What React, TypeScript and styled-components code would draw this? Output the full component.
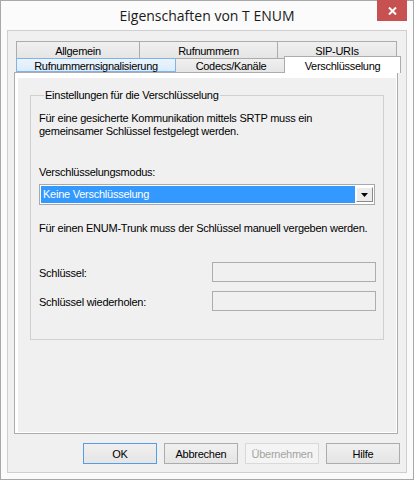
import React from 'react';
import styled, { createGlobalStyle, css } from 'styled-components';

const Global = createGlobalStyle`
  html, body { margin: 0; padding: 0; background: #ffffff; }
  body {
    font-family: "Liberation Sans", Arial, sans-serif;
    font-size: 11px;
    color: #000;
  }
  * { box-sizing: border-box; }
`;

const Window = styled.div`
  width: 414px;
  height: 480px;
  border: 1px solid #a8a8a8;
  background: #fbfbfb;
  padding: 0 6px 6px;
  display: flex;
  flex-direction: column;
`;

const TitleBar = styled.div`
  height: 29px;
  display: grid;
  grid-template-columns: 1fr auto 1fr;
  align-items: start;
`;

const Title = styled.div`
  grid-column: 2;
  font-family: "Open Sans", "Noto Sans", sans-serif;
  font-size: 14px;
  line-height: 30px;
  color: #1a1a1a;
  white-space: nowrap;
`;

const CloseButton = styled.div`
  grid-column: 3;
  justify-self: end;
  margin-top: -1px;
  width: 30px;
  height: 21px;
  background: #c75050;
  display: flex;
  align-items: center;
  justify-content: center;
`;

const Client = styled.div`
  flex: 1;
  border: 1px solid #cfcfcf;
  background: #f0f0f0;
  padding: 10px 6px 8px 6px;
  display: flex;
  flex-direction: column;
`;

const TabControl = styled.div`
  height: 393px;
  margin-right: 2px;
  display: flex;
  flex-direction: column;
`;

const TabRow = styled.div<{ $h: number }>`
  display: flex;
  height: ${(p) => p.$h}px;
  padding-left: 2px;
`;

type TabKind = 'normal' | 'hot' | 'selected';

const Tab = styled.div<{ $w: number; $kind?: TabKind }>`
  position: relative;
  width: ${(p) => p.$w}px;
  flex: none;
  margin-left: -1px;
  &:first-child { margin-left: 0; }
  border: 1px solid #acacac;
  border-bottom: none;
  background: linear-gradient(#f0f0f0, #e5e5e5);
  display: flex;
  align-items: center;
  justify-content: center;
  white-space: nowrap;
  letter-spacing: -0.3px;
  padding-top: 1px;
  ${(p) =>
    p.$kind === 'hot' &&
    css`
      z-index: 1;
      border: 1px solid #7eb4ea;
      background: linear-gradient(#ecf4fc, #dcecfc);
      padding-top: 2px;
    `}
  ${(p) =>
    p.$kind === 'selected' &&
    css`
      z-index: 2;
      margin: -2px -2px -1px -3px;
      background: #ffffff;
      align-items: flex-start;
      padding-top: 3px;
    `}
`;

const Panel = styled.div`
  flex: 1;
  border: 1px solid #acacac;
  background: #ffffff;
  padding: 5px 1px 1px 3px;
  display: flex;
`;

const Page = styled.div`
  flex: 1;
  background: #f0f0f0;
  padding: 11px 0 0 12px;
`;

const GroupBox = styled.fieldset`
  margin: 0;
  width: 354px;
  border: 1px solid #d0d0d0;
  padding: 10px 7px 28px 8px;
  min-width: 0;
`;

const Legend = styled.legend`
  margin-left: 5px;
  padding: 0 1px;
  line-height: 13px;
  letter-spacing: -0.25px;
`;

const Text = styled.div<{ $mt?: number }>`
  line-height: 13px;
  letter-spacing: -0.25px;
  margin-top: ${(p) => p.$mt ?? 0}px;
  white-space: nowrap;
`;

const Combo = styled.div`
  margin-top: 5px;
  width: 336px;
  height: 21px;
  border: 1px solid #a9a9a9;
  padding: 1px;
  background: #ffffff;
  display: flex;
`;

const ComboValue = styled.div`
  flex: 1;
  background: #3399ff;
  color: #ffffff;
  padding-left: 2px;
  line-height: 17px;
  letter-spacing: -0.25px;
  white-space: nowrap;
`;

const ComboButton = styled.div`
  width: 17px;
  height: 15px;
  margin: 1px 0 0 1px;
  border: 1px solid;
  border-color: #ffffff #8a8a8a #8a8a8a #ffffff;
  background: #ececec;
  display: flex;
  align-items: center;
  justify-content: center;
`;

const FieldRow = styled.div<{ $mt: number }>`
  display: flex;
  align-items: center;
  margin-top: ${(p) => p.$mt}px;
`;

const FieldLabel = styled.div`
  width: 173px;
  line-height: 13px;
  padding-top: 3px;
  letter-spacing: -0.25px;
`;

const Input = styled.div`
  width: 164px;
  height: 20px;
  border: 1px solid #adadad;
  background: #f0f0f0;
`;

const ButtonRow = styled.div`
  margin-top: 9px;
  display: flex;
  justify-content: flex-end;
  gap: 7px;
`;

const Button = styled.div<{ $default?: boolean; $disabled?: boolean }>`
  width: 74px;
  height: 21px;
  border: 1px solid #acacac;
  background: linear-gradient(#f0f0f0, #e5e5e5);
  display: flex;
  align-items: center;
  justify-content: center;
  letter-spacing: -0.25px;
  ${(p) =>
    p.$default &&
    css`
      border-color: #569de5;
    `}
  ${(p) =>
    p.$disabled &&
    css`
      border-color: #d9d9d9;
      background: #f4f4f4;
      color: #a3a3a3;
    `}
`;

export default function App() {
  return (
    <>
      <Global />
      <Window>
        <TitleBar>
          <Title>Eigenschaften von T ENUM</Title>
          <CloseButton>
            <svg width="9" height="8" viewBox="0 0 9 8">
              <path d="M1 0.5 L8 7.5 M8 0.5 L1 7.5" stroke="#ffffff" strokeWidth="2" />
            </svg>
          </CloseButton>
        </TitleBar>
        <Client>
          <TabControl>
            <TabRow $h={17}>
              <Tab $w={124}>Allgemein</Tab>
              <Tab $w={139}>Rufnummern</Tab>
              <Tab $w={120}>SIP-URIs</Tab>
            </TabRow>
            <TabRow $h={14}>
              <Tab $w={160} $kind="hot">Rufnummernsignalisierung</Tab>
              <Tab $w={112}>Codecs/Kanäle</Tab>
              <Tab $w={117} $kind="selected">Verschlüsselung</Tab>
            </TabRow>
            <Panel>
              <Page>
                <GroupBox>
                  <Legend>Einstellungen für die Verschlüsselung</Legend>
                  <Text>Für eine gesicherte Kommunikation mittels SRTP muss ein</Text>
                  <Text>gemeinsamer Schlüssel festgelegt werden.</Text>
                  <Text $mt={28}>Verschlüsselungsmodus:</Text>
                  <Combo>
                    <ComboValue>Keine Verschlüsselung</ComboValue>
                    <ComboButton>
                      <svg width="7" height="4" viewBox="0 0 7 4">
                        <polygon points="0,0 7,0 3.5,4" fill="#000" />
                      </svg>
                    </ComboButton>
                  </Combo>
                  <Text $mt={17}>Für einen ENUM-Trunk muss der Schlüssel manuell vergeben werden.</Text>
                  <FieldRow $mt={27}>
                    <FieldLabel>Schlüssel:</FieldLabel>
                    <Input />
                  </FieldRow>
                  <FieldRow $mt={9}>
                    <FieldLabel>Schlüssel wiederholen:</FieldLabel>
                    <Input />
                  </FieldRow>
                </GroupBox>
              </Page>
            </Panel>
          </TabControl>
          <ButtonRow>
            <Button $default>OK</Button>
            <Button>Abbrechen</Button>
            <Button $disabled>Übernehmen</Button>
            <Button>Hilfe</Button>
          </ButtonRow>
        </Client>
      </Window>
    </>
  );
}
